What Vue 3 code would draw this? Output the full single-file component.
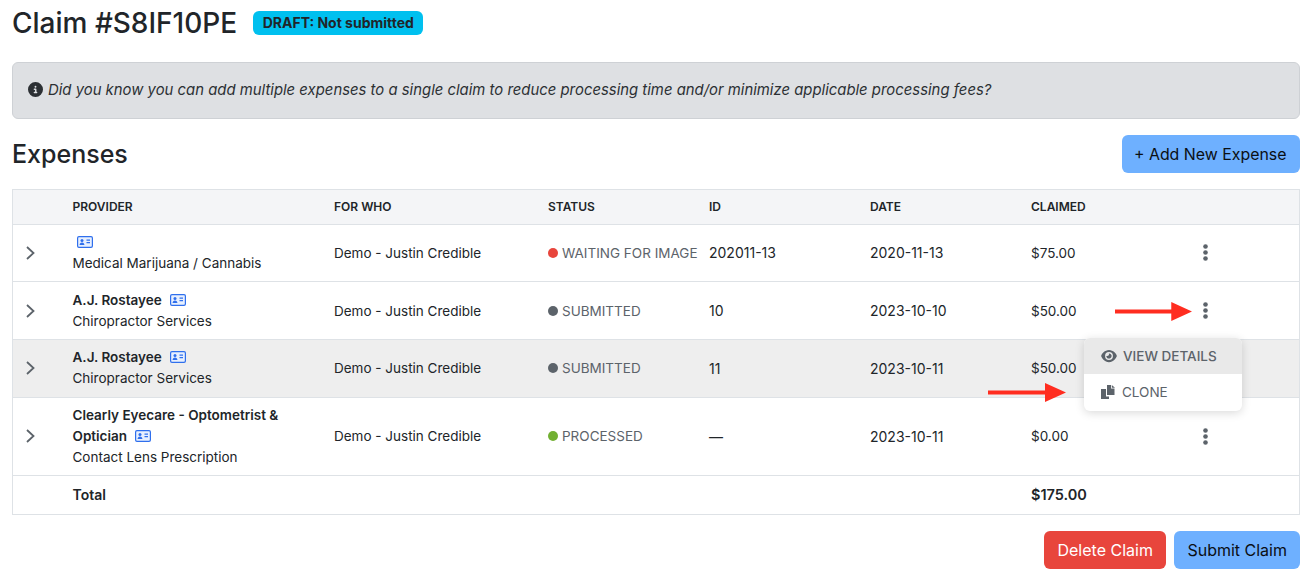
<script setup>
const rows = [
  { provider: "", service: "Medical Marijuana / Cannabis", status: "WAITING FOR IMAGE", dot: "red", id: "202011-13", date: "2020-11-13", claimed: "$75.00" },
  { provider: "A.J. Rostayee", service: "Chiropractor Services", status: "SUBMITTED", dot: "grey", id: "10", date: "2023-10-10", claimed: "$50.00" },
  { provider: "A.J. Rostayee", service: "Chiropractor Services", status: "SUBMITTED", dot: "grey", id: "11", date: "2023-10-11", claimed: "$50.00", hover: true },
  { provider: "Clearly Eyecare - Optometrist & Optician", service: "Contact Lens Prescription", status: "PROCESSED", dot: "green", id: "—", date: "2023-10-11", claimed: "$0.00", tall: true },
]
</script>

<template>
  <div class="page">
    <div class="title-row">
      <h1>Claim #S8IF10PE</h1>
      <span class="badge">DRAFT: Not submitted</span>
    </div>

    <div class="notice">
      <svg class="info" viewBox="0 0 512 512"><path d="M256 512A256 256 0 1 0 256 0a256 256 0 1 0 0 512zM216 336h24V272H216c-13.3 0-24-10.7-24-24s10.7-24 24-24h48c13.3 0 24 10.7 24 24v88h8c13.3 0 24 10.7 24 24s-10.7 24-24 24H216c-13.3 0-24-10.7-24-24s10.7-24 24-24zm40-208a32 32 0 1 1 0 64 32 32 0 1 1 0-64z" /></svg>
      <em>Did you know you can add multiple expenses to a single claim to reduce processing time and/or minimize applicable processing fees?</em>
    </div>

    <div class="section-row">
      <h2>Expenses</h2>
      <button class="btn blue add">+ Add New Expense</button>
    </div>

    <div class="table-wrap">
      <table>
        <colgroup>
          <col class="c-chev" />
          <col class="c-provider" />
          <col class="c-who" />
          <col class="c-mid" />
          <col class="c-mid" />
          <col class="c-mid" />
          <col class="c-mid" />
          <col />
        </colgroup>
        <thead>
          <tr>
            <th></th>
            <th>PROVIDER</th>
            <th>FOR WHO</th>
            <th>STATUS</th>
            <th>ID</th>
            <th>DATE</th>
            <th>CLAIMED</th>
            <th></th>
          </tr>
        </thead>
        <tbody>
          <tr v-for="(r, i) in rows" :key="i" :class="{ hover: r.hover, tall: r.tall }">
            <td class="chev-cell">
              <svg class="chev" viewBox="0 0 9 14"><path d="M1 1l6.500 6L1 13" /></svg>
            </td>
            <td class="provider">
              <div class="name">
                <b v-if="r.provider">{{ r.provider }}</b>
                <svg class="card" viewBox="0 0 16 12"><rect x="0.6" y="0.6" width="14.8" height="10.8" rx="1.4" /><circle cx="5" cy="4.6" r="1.5" class="solid" /><path class="solid" d="M2.6 9c0-1.5 1-2.5 2.4-2.5S7.4 7.500 7.400 9z" /><path class="line" d="M9.500 4.200h3.500M9.500 6.600h3.500" /></svg>
              </div>
              <div class="service">{{ r.service }}</div>
            </td>
            <td>Demo - Justin Credible</td>
            <td class="status"><i class="dot" :class="r.dot"></i>{{ r.status }}</td>
            <td class="num">{{ r.id }}</td>
            <td class="num">{{ r.date }}</td>
            <td>{{ r.claimed }}</td>
            <td class="kebab-cell">
              <svg class="kebab" viewBox="0 0 5 17"><circle cx="2.5" cy="2.500" r="2.300" /><circle cx="2.5" cy="8.500" r="2.300" /><circle cx="2.5" cy="14.500" r="2.300" /></svg>
            </td>
          </tr>
          <tr class="total">
            <td></td>
            <td><b>Total</b></td>
            <td></td>
            <td></td>
            <td></td>
            <td></td>
            <td><b class="sum">$175.00</b></td>
            <td></td>
          </tr>
        </tbody>
      </table>

      <div class="menu">
        <div class="menu-item active">
          <svg class="eye" viewBox="0 0 576 512"><path d="M288 32c-80.800 0-145.500 36.800-192.600 80.600C48.600 156 17.300 208 2.500 243.700c-3.300 7.900-3.300 16.700 0 24.600C17.300 304 48.600 356 95.400 399.400 142.500 443.200 207.200 480 288 480s145.500-36.800 192.600-80.600c46.800-43.500 78.100-95.400 93-131.100 3.300-7.900 3.300-16.700 0-24.600-14.900-35.700-46.200-87.700-93-131.100C433.500 68.800 368.800 32 288 32zM144 256a144 144 0 1 1 288 0 144 144 0 1 1-288 0zm144-64c0 35.300-28.700 64-64 64-7.100 0-13.900-1.200-20.300-3.300-5.500-1.800-11.900 1.600-11.700 7.400.3 6.900 1.300 13.800 3.200 20.700 13.700 51.200 66.400 81.600 117.600 67.900s81.600-66.400 67.900-117.600c-11.100-41.500-47.800-69.400-88.600-71.100-5.800-.2-9.200 6.100-7.400 11.700 2.100 6.400 3.300 13.200 3.300 20.300z" /></svg>
          VIEW DETAILS
        </div>
        <div class="menu-item">
          <svg class="copy" viewBox="0 0 14 14"><path d="M6 0h4v3.500h3.500V10H6z" /><path d="M10.800 0 14 2.800h-3.200z" /><path d="M0 4h5v7.500h3V14H0z" /></svg>
          CLONE
        </div>
      </div>

      <svg class="arrow arrow-top" viewBox="0 0 78 20" preserveAspectRatio="none"><path d="M0 8h57V0l21 10-21 10v-8H0z" /></svg>
      <svg class="arrow arrow-bottom" viewBox="0 0 78 20" preserveAspectRatio="none"><path d="M0 8h57V0l21 10-21 10v-8H0z" /></svg>
    </div>

    <div class="actions">
      <button class="btn red">Delete Claim</button>
      <button class="btn blue">Submit Claim</button>
    </div>
  </div>
</template>

<style>
html,
body {
  background: #fff;
}
</style>

<style scoped>
.page {
  padding: 0 7px 0 12px;
  font-family: Inter, "Liberation Sans", sans-serif;
  color: #212529;
  font-size: 13.5px;
}

.title-row {
  display: flex;
  align-items: center;
  height: 46px;
  gap: 16px;
}

h1 {
  margin: -1px 0 0;
  font-size: 28px;
  font-weight: 500;
  line-height: 34px;
}

.badge {
  background: #00c0ef;
  border-radius: 6px;
  padding: 0 9px 0 9.5px;
  height: 24px;
  line-height: 24px;
  font-size: 14px;
  font-weight: 700;
}

.notice {
  margin-top: 16px;
  height: 57px;
  box-sizing: border-box;
  background: #dee0e3;
  border: 1px solid #ced1d5;
  border-radius: 6px;
  padding: 0 15px 2px;
  display: flex;
  align-items: center;
  gap: 5px;
  color: #2c3034;
  font-size: 14.88px;
}

.info {
  width: 15px;
  height: 15px;
  fill: #2c3034;
  flex: none;
}

.section-row {
  display: flex;
  justify-content: space-between;
  align-items: center;
  margin-top: 16px;
  height: 38px;
}

h2 {
  margin: 0;
  font-size: 25px;
  font-weight: 500;
}

.btn {
  border: 0;
  border-radius: 6px;
  height: 38px;
  padding: 0 13px;
  font-family: inherit;
  font-size: 16px;
  color: #0b0f14;
}

.btn.add {
  padding: 0 13.5px 0 11.5px;
  font-size: 15.9px;
}

.btn.blue {
  background: #6eb0ff;
}

.btn.red {
  background: #e8453c;
  color: #fff;
  padding: 0 13.5px;
}

.table-wrap {
  position: relative;
  margin-top: 16px;
}

table {
  width: 100%;
  table-layout: fixed;
  border-collapse: collapse;
  border: 1px solid #dee2e6;
}

.c-chev {
  width: 48px;
}

.c-provider {
  width: 261.5px;
}

.c-who {
  width: 214px;
}

.c-mid {
  width: 161px;
}

th {
  background: #f4f5f7;
  height: 32.5px;
  padding: 0 12px 1px;
  text-align: left;
  font-size: 12px;
  font-weight: 600;
  border-bottom: 1px solid #dee2e6;
}

td {
  padding: 0 12px;
  height: 56.7px;
  border-bottom: 1px solid #dee2e6;
}

tr.hover td {
  background: #eeeeee;
}

tr.tall td {
  height: 77px;
}

tr.total td {
  height: 38px;
}

.chev-cell {
  padding-right: 0;
}

.chev {
  display: block;
  width: 9px;
  height: 14px;
  margin-left: 0.5px;
  fill: none;
  stroke: #5c636a;
  stroke-width: 1.800;
}

.name {
  line-height: 21px;
}

.service {
  line-height: 21px;
}

.name b,
.total b {
  font-weight: 600;
}

.total b {
  font-size: 14px;
}

.card {
  display: inline-block;
  width: 16px;
  height: 12px;
  margin-left: 4px;
  vertical-align: -1px;
}

.name b + .card {
  margin-left: 8px;
}

.card rect {
  fill: #e8f0fe;
  stroke: #2f6fed;
  stroke-width: 1.200;
}

.card .solid {
  fill: #2f6fed;
}

.card .line {
  stroke: #2f6fed;
  stroke-width: 1.200;
  fill: none;
}

.status {
  color: #5c636a;
  white-space: nowrap;
}

.num {
  font-size: 14px;
}

.dot {
  display: inline-block;
  width: 10px;
  height: 10px;
  border-radius: 50%;
  margin-right: 4px;
}

.dot.red {
  background: #e8453c;
}

.dot.grey {
  background: #5c636a;
}

.dot.green {
  background: #72b032;
}

.kebab-cell {
  padding-left: 23px;
}

.kebab {
  display: block;
  width: 5px;
  height: 17px;
  fill: #5c636a;
}

.total b.sum {
  font-size: 14.5px;
}

.menu {
  position: absolute;
  left: 1072px;
  top: 148.5px;
  width: 158px;
  height: 73px;
  background: #fff;
  border-radius: 6px;
  overflow: hidden;
  box-shadow: 0 2px 10px rgba(0, 0, 0, 0.15);
  color: #5c636a;
  font-size: 13.5px;
}

.menu-item {
  height: 36px;
  display: flex;
  align-items: center;
  padding-left: 17px;
  gap: 7px;
}

.menu-item.active {
  background: #e9e9e9;
  font-weight: 500;
  gap: 6px;
}

.eye {
  width: 16px;
  height: 14px;
  fill: #5c636a;
}

.copy {
  width: 14px;
  height: 14px;
  fill: #5c636a;
}

.arrow {
  position: absolute;
  fill: #ff2d20;
}

.arrow-top {
  left: 1103px;
  top: 112.5px;
  width: 77px;
  height: 19px;
}

.arrow-bottom {
  left: 976px;
  top: 193.5px;
  width: 78px;
  height: 19px;
}

.actions {
  display: flex;
  justify-content: flex-end;
  gap: 8px;
  margin-top: 16.5px;
}
</style>
